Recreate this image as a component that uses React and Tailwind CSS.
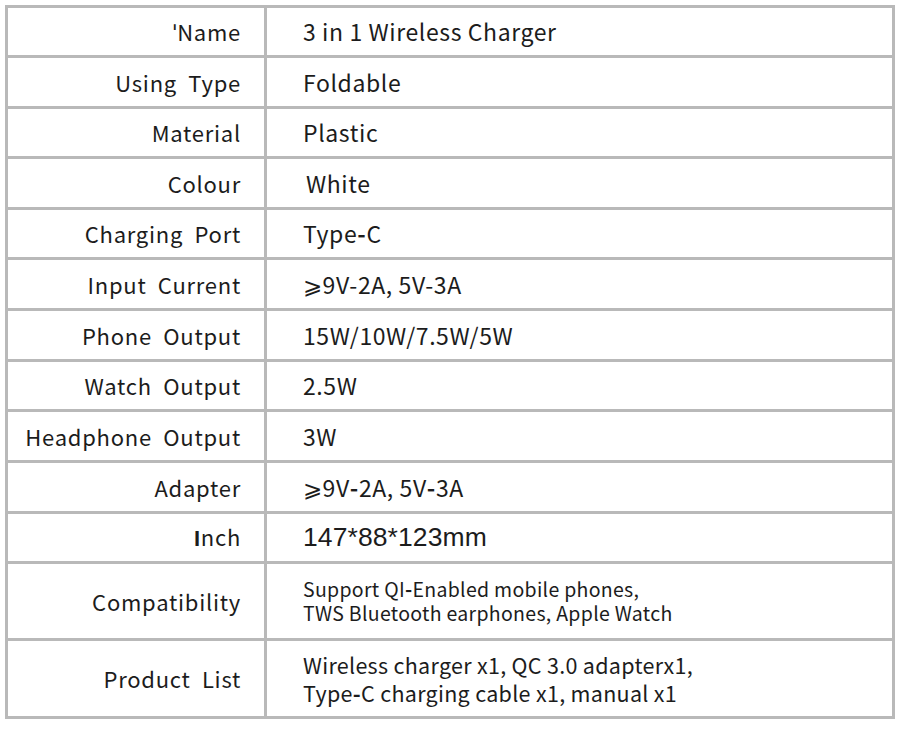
import React from "react";

const H = () => <span className="font-bold">-</span>;

const rows = [
  { h: "h-[47px]", l: <>ˈName</>, r: <>3 in 1 Wireless Charger</> },
  { h: "h-[48px]", l: <>Using&nbsp; Type</>, r: <>Foldable</> },
  { h: "h-[47px]", l: <>Material</>, r: <>Plastic</> },
  { h: "h-[48px]", l: <>Colour</>, r: <span className="pl-[3px]">White</span> },
  { h: "h-[47px]", l: <>Charging&nbsp; Port</>, r: <>Type<H />C</> },
  { h: "h-[48px]", l: <>Input&nbsp; Current</>, r: <>⩾9V-2A, 5V-3A</> },
  { h: "h-[48px]", l: <>Phone&nbsp; Output</>, r: <>15W/10W/7.5W/5W</> },
  { h: "h-[47px]", l: <>Watch&nbsp; Output</>, r: <>2.5W</> },
  { h: "h-[48px]", l: <>Headphone&nbsp; Output</>, r: <>3W</> },
  { h: "h-[48px]", l: <>Adapter</>, r: <>⩾9V<H />2A, 5V<H />3A</> },
  {
    h: "h-[47px]",
    l: <><span className="font-bold font-['Liberation_Sans',sans-serif]">I</span>nch</>,
    r: <span className="font-['Liberation_Sans',sans-serif] text-[26.5px] tracking-[0.1px]">147*88*123mm</span>,
  },
  {
    h: "h-[74px]",
    l: <>Compatibility</>,
    r: (
      <div className="text-[19.5px] leading-[24px] tracking-[0.3px]">
        <div>Support QI<H />Enabled mobile phones,</div>
        <div>TWS Bluetooth earphones, Apple Watch</div>
      </div>
    ),
  },
  {
    h: "h-[75px]",
    l: <>Product&nbsp; List</>,
    r: (
      <div className="text-[21.5px] leading-[28px] tracking-[0.3px]">
        <div>Wireless charger x1, QC 3.0 adapterx1,</div>
        <div>Type<H />C charging cable x1, manual x1</div>
      </div>
    ),
  },
];

export default function App() {
  return (
    <div className="w-[897px] h-[732px] bg-white pt-[5px] pl-[5px] font-['Noto_Sans_CJK_SC','Noto_Sans',sans-serif] text-[#1c1c1c]">
      <div className="w-[890px] grid grid-cols-[256px_625px] gap-[3px] p-[3px] bg-[#b9b9b9]">
        {rows.map((row, i) => (
          <React.Fragment key={i}>
            <div
              className={`${row.h} bg-white flex items-center justify-end pr-[23px] text-[22px] tracking-[0.75px]`}
            >
              <span>{row.l}</span>
            </div>
            <div className={`${row.h} bg-white flex items-center pl-[36px] text-[23px] tracking-[0.6px]`}>
              {row.r}
            </div>
          </React.Fragment>
        ))}
      </div>
    </div>
  );
}
